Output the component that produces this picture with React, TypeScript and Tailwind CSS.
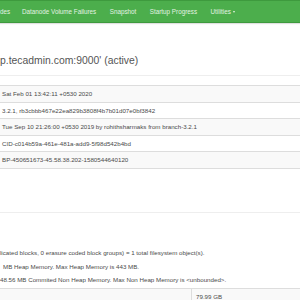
const navItems = ["des", "Datanode Volume Failures", "Snapshot", "Startup Progress"];

const overviewRows = [
  { value: "Sat Feb 01 13:42:11 +0530 2020", h: "h-[17px]" },
  { value: "3.2.1, rb3cbbb467e22ea829b3808f4b7b01d07e0bf3842", h: "h-[16px]" },
  { value: "Tue Sep 10 21:26:00 +0530 2019 by rohithsharmaks from branch-3.2.1", h: "h-[17px]" },
  { value: "CID-c014b59a-461e-481a-add9-5f98d542b4bd", h: "h-[16px]" },
  { value: "BP-450651673-45.58.38.202-1580544640120", h: "h-[17px]" },
];

export default function App() {
  return (
    <div className="h-[300px] w-[300px] overflow-hidden bg-white font-['Liberation_Sans',Arial,sans-serif]">
      {/* navbar */}
      <nav className="flex h-[23px] items-center gap-[13.5px] overflow-hidden whitespace-nowrap border-y border-y-[#3e9a3e] bg-[#4cae4c] text-[6.3px] text-[#e3f2e3] shadow-[0_1px_1px_rgba(0,0,0,0.12)]">
        {navItems.map((item, i) => (
          <span key={item} className={i === 0 ? "-mr-[1.7px]" : ""}>
            {item}
          </span>
        ))}
        <span className="flex items-center">
          Utilities
          <span className="ml-[2px] inline-block h-0 w-0 border-x-[1.5px] border-t-[2px] border-x-transparent border-t-[#e3f2e3]" />
        </span>
      </nav>

      {/* page header */}
      <div className="flex h-[53px] items-end border-b border-b-[#eee] pb-[8px]">
        <h1 className="whitespace-nowrap text-[10.4px] leading-[12px] text-[#555]">
          p.tecadmin.com:9000&apos; (active)
        </h1>
      </div>

      {/* overview table */}
      <div className="mt-[9px] border-b border-b-[#ddd] text-[6.2px] text-[#4a4a4a]">
        {overviewRows.map((row, i) => (
          <div
            key={row.value}
            className={`flex items-center whitespace-nowrap border-t border-t-[#ddd] pl-[2px] ${row.h} ${
              i % 2 === 0 ? "bg-[#f9f9f9]" : "bg-white"
            }`}
          >
            {row.value}
          </div>
        ))}
      </div>

      {/* summary header */}
      <div className="h-[44px] border-b border-b-[#eee]" />

      <div className="pt-[33px] text-[6.2px] leading-[13.5px] text-[#4a4a4a]">
        <p className="whitespace-nowrap">
          licated blocks, 0 erasure coded block groups) = 1 total filesystem object(s).
        </p>
        <p className="whitespace-nowrap pl-[3px]">MB Heap Memory. Max Heap Memory is 443 MB.</p>
        <p className="whitespace-nowrap">
          48.56 MB Commited Non Heap Memory. Max Non Heap Memory is &lt;unbounded&gt;.
        </p>
      </div>

      <div className="mt-[1.5px] flex h-[17px] border-t border-t-[#ddd] bg-[#f9f9f9] text-[6.2px] text-[#4a4a4a]">
        <div className="w-[192px] border-r border-r-[#ddd]" />
        <div className="flex items-center pl-[4px]">79.99 GB</div>
      </div>
    </div>
  );
}
